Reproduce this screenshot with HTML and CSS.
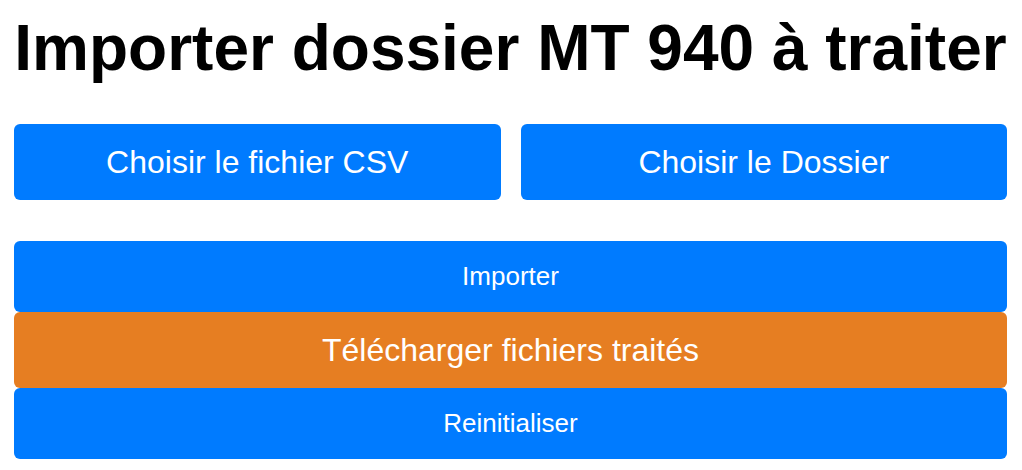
FILE: index.html
```html
<!DOCTYPE html>
<html lang="fr">
<head>
<meta charset="utf-8">
<title>Importer dossier MT 940</title>
<link rel="stylesheet" href="styles.css">
</head>
<body>
<main class="page">
  <h1 class="title">Importer dossier MT 940 à traiter</h1>
  <div class="pickers">
    <button class="btn btn-primary btn-large" type="button">Choisir le fichier CSV</button>
    <button class="btn btn-primary btn-large" type="button">Choisir le Dossier</button>
  </div>
  <div class="actions">
    <button class="btn btn-primary btn-medium" type="button">Importer</button>
    <button class="btn btn-orange btn-large" type="button">Télécharger fichiers traités</button>
    <button class="btn btn-primary btn-medium" type="button">Reinitialiser</button>
  </div>
</main>
</body>
</html>
```
FILE: styles.css
```css
html, body {
  margin: 0;
  padding: 0;
  background: #ffffff;
}

body {
  font-family: "Liberation Sans", Arial, sans-serif;
  color: #000000;
}

.page {
  padding: 0 15px 0 14px;
}

.title {
  margin: 11px 0 39px;
  font-size: 64px;
  line-height: 74px;
  font-weight: bold;
  text-align: center;
  white-space: nowrap;
}

.pickers {
  display: grid;
  grid-template-columns: 1fr 1fr;
  gap: 20px;
}

.actions {
  margin-top: 41px;
  display: flex;
  flex-direction: column;
}

.btn {
  display: flex;
  align-items: center;
  justify-content: center;
  width: 100%;
  border: none;
  border-radius: 6px;
  color: #ffffff;
  font-family: "Liberation Sans", Arial, sans-serif;
  padding: 0 10px;
  margin: 0;
  cursor: pointer;
}

.btn-primary {
  background: #007bff;
}

.btn-orange {
  background: #e67e22;
}

.btn-large {
  font-size: 32px;
  height: 76px;
}

.btn-medium {
  font-size: 26px;
  height: 71px;
}
```
